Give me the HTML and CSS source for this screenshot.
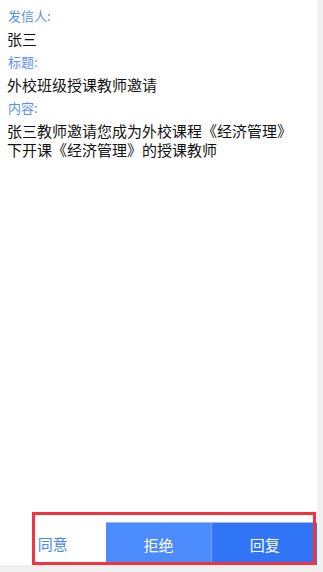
FILE: index.html
```html
<!DOCTYPE html>
<html lang="zh-CN">
<head>
<meta charset="utf-8">
<title>消息详情</title>
<link rel="stylesheet" href="styles.css">
</head>
<body>
<div class="screen">
  <main class="main">
    <section class="detail">
      <div class="label">发信人:</div>
      <div class="value">张三</div>
      <div class="label">标题:</div>
      <div class="value">外校班级授课教师邀请</div>
      <div class="label">内容:</div>
      <div class="value">张三教师邀请您成为外校课程《经济管理》下开课《经济管理》的授课教师</div>
    </section>
    <footer class="actions">
      <div class="action agree">同意</div>
      <div class="action reject">拒绝</div>
      <div class="action reply">回复</div>
      <div class="highlight"></div>
    </footer>
  </main>
  <div class="vbar"></div>
  <div class="hbar"></div>
  <div class="corner"></div>
</div>
</body>
</html>
```

FILE: styles.css
```css
html, body {
  margin: 0;
  padding: 0;
  background: #ffffff;
}
body {
  font-family: "Microsoft YaHei", "Noto Sans CJK SC", "Noto Sans", sans-serif;
  color: #111111;
}
.screen {
  width: 323px;
  height: 572px;
  display: grid;
  grid-template-columns: 317px 6px;
  grid-template-rows: 565px 7px;
  overflow: hidden;
}
.main {
  display: flex;
  flex-direction: column;
  position: relative;
  background: #ffffff;
}
.detail {
  padding: 5px 8px 0 8px;
}
.label {
  font-size: 13px;
  line-height: 21px;
  color: #5b8ff9;
}
.value {
  font-size: 15px;
  line-height: 19px;
  color: #111111;
  margin: 3px 0 3px -1px;
  padding-right: 12px;
}
.actions {
  margin-top: auto;
  height: 43px;
  display: grid;
  grid-template-columns: 1fr 1fr 1fr;
  position: relative;
}
.action {
  display: flex;
  align-items: center;
  justify-content: center;
  font-size: 15px;
}
.agree {
  color: #4a86f5;
  background: #ffffff;
}
.reject {
  background: #4b8bfc;
  color: #ffffff;
  border-top: 1px solid #9dbcf7;
}
.reply {
  background: #2f75f6;
  color: #ffffff;
  border-top: 1px solid #9dbcf7;
  border-left: 1px solid #77a3f5;
}
.highlight {
  position: absolute;
  left: 32px;
  right: 1px;
  top: -10px;
  bottom: 0;
  border: 3px solid #f5333f;
  pointer-events: none;
}
.vbar {
  background: #f1f1f1;
}
.hbar {
  background: #f0f0f0;
}
.corner {
  background: #f0f0f0;
}
```
